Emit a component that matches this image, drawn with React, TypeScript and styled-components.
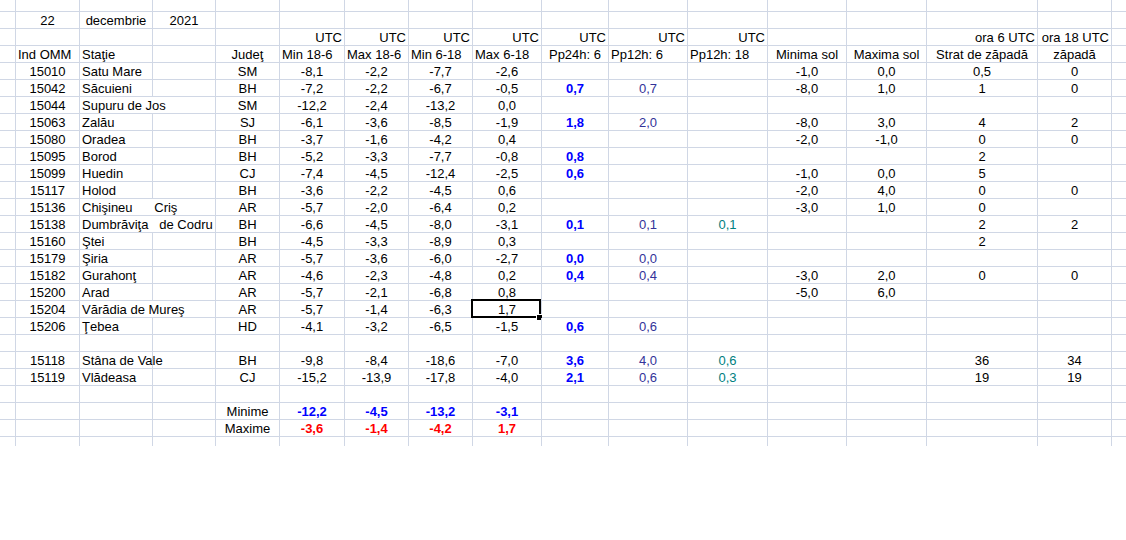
import React from "react";
import styled, { createGlobalStyle } from "styled-components";

const GlobalStyle = createGlobalStyle`
  html, body { margin: 0; padding: 0; background: #ffffff; }
  body {
    font-family: "Liberation Sans", Arial, sans-serif;
    font-size: 13px;
    color: #000000;
  }
`;

type Align = "l" | "c" | "r";
type Tone = "black" | "blue" | "purple" | "teal" | "red";

const toneColor: Record<Tone, string> = {
  black: "#000000",
  blue: "#0000ff",
  purple: "#333399",
  teal: "#008080",
  red: "#ff0000",
};

const Sheet = styled.div`
  display: grid;
  grid-template-columns: 16px 64px 73px 63px 64px 65px 64px 64px 69px 67px 79px 80px 79px 80px 111px 74px 14px;
  grid-template-rows: 12px repeat(25, 17px) 9px;
  width: 1126px;
  overflow: hidden;
`;

const Cell = styled.div<{ $align: Align; $tone: Tone; $bold: boolean; $span: number; $edge: boolean; $open: boolean }>`
  position: relative;
  box-sizing: border-box;
  grid-column: span ${(p) => p.$span};
  border-right: ${(p) => (p.$edge ? "none" : "1px solid #d0d7e5")};
  border-bottom: ${(p) => (p.$open ? "none" : "1px solid #d0d7e5")};
  padding: 1px 2px 0 2px;
  line-height: 15px;
  white-space: pre;
  text-align: ${(p) => (p.$align === "l" ? "left" : p.$align === "r" ? "right" : "center")};
  font-weight: ${(p) => (p.$bold ? 700 : 400)};
  color: ${(p) => toneColor[p.$tone]};
`;

const Selection = styled.div`
  position: absolute;
  left: -2px;
  top: -2px;
  right: 0;
  bottom: -1px;
  border: 2px solid #000000;
  pointer-events: none;
`;

const Handle = styled.div`
  position: absolute;
  right: -3px;
  bottom: -4px;
  width: 5px;
  height: 5px;
  background: #000000;
  border-left: 1px solid #ffffff;
  border-top: 1px solid #ffffff;
`;

type C = { t?: string; a?: Align; tone?: Tone; b?: boolean; span?: number; sel?: boolean };

const E: C = {};

const NCOLS = 17;

function dataRow(
  id: string,
  name: string,
  jud: string,
  vals: [string, string, string, string],
  pp24: string,
  pp6: string,
  pp18: string,
  minSol: string,
  maxSol: string,
  strat: string,
  z18: string,
  wide = false,
  selected = false
): C[] {
  const cells: C[] = [E, { t: id, a: "c" }];
  if (wide) cells.push({ t: name, a: "l", span: 2 });
  else cells.push({ t: name, a: "l" }, E);
  cells.push(
    { t: jud, a: "c" },
    { t: vals[0], a: "c" },
    { t: vals[1], a: "c" },
    { t: vals[2], a: "c" },
    { t: vals[3], a: "c", sel: selected },
    { t: pp24, a: "c", tone: "blue", b: true },
    { t: pp6, a: "c", tone: "purple" },
    { t: pp18, a: "c", tone: "teal" },
    { t: minSol, a: "c" },
    { t: maxSol, a: "c" },
    { t: strat, a: "c" },
    { t: z18, a: "c" },
    E
  );
  return cells;
}

const emptyRow = (): C[] => Array.from({ length: NCOLS }, () => E);

const utc: C = { t: "UTC", a: "r" };

const rows: C[][] = [
  emptyRow(),
  [E, { t: "22", a: "c" }, { t: "decembrie", a: "c" }, { t: "2021", a: "c" }, E, E, E, E, E, E, E, E, E, E, E, E, E],
  [E, E, E, E, E, utc, utc, utc, utc, utc, utc, utc, E, E, { t: "ora 6 UTC", a: "r" }, { t: "ora 18 UTC", a: "r" }, E],
  [
    E,
    { t: "Ind OMM", a: "l" },
    { t: "Staţie", a: "l" },
    E,
    { t: "Judeţ", a: "c" },
    { t: "Min 18-6", a: "l" },
    { t: "Max 18-6", a: "l" },
    { t: "Min 6-18", a: "l" },
    { t: "Max 6-18", a: "l" },
    { t: "Pp24h: 6", a: "c" },
    { t: "Pp12h: 6", a: "l" },
    { t: "Pp12h: 18", a: "l" },
    { t: "Minima sol", a: "c" },
    { t: "Maxima sol", a: "c" },
    { t: "Strat de zăpadă", a: "c" },
    { t: "zăpadă", a: "c" },
    E,
  ],
  dataRow("15010", "Satu Mare", "SM", ["-8,1", "-2,2", "-7,7", "-2,6"], "", "", "", "-1,0", "0,0", "0,5", "0"),
  dataRow("15042", "Săcuieni", "BH", ["-7,2", "-2,2", "-6,7", "-0,5"], "0,7", "0,7", "", "-8,0", "1,0", "1", "0"),
  dataRow("15044", "Supuru de Jos", "SM", ["-12,2", "-2,4", "-13,2", "0,0"], "", "", "", "", "", "", "", true),
  dataRow("15063", "Zalău", "SJ", ["-6,1", "-3,6", "-8,5", "-1,9"], "1,8", "2,0", "", "-8,0", "3,0", "4", "2"),
  dataRow("15080", "Oradea", "BH", ["-3,7", "-1,6", "-4,2", "0,4"], "", "", "", "-2,0", "-1,0", "0", "0"),
  dataRow("15095", "Borod", "BH", ["-5,2", "-3,3", "-7,7", "-0,8"], "0,8", "", "", "", "", "2", ""),
  dataRow("15099", "Huedin", "CJ", ["-7,4", "-4,5", "-12,4", "-2,5"], "0,6", "", "", "-1,0", "0,0", "5", ""),
  dataRow("15117", "Holod", "BH", ["-3,6", "-2,2", "-4,5", "0,6"], "", "", "", "-2,0", "4,0", "0", "0"),
  dataRow("15136", "Chişineu      Criş", "AR", ["-5,7", "-2,0", "-6,4", "0,2"], "", "", "", "-3,0", "1,0", "0", "", true),
  dataRow("15138", "Dumbrăviţa   de Codru", "BH", ["-6,6", "-4,5", "-8,0", "-3,1"], "0,1", "0,1", "0,1", "", "", "2", "2", true),
  dataRow("15160", "Ştei", "BH", ["-4,5", "-3,3", "-8,9", "0,3"], "", "", "", "", "", "2", ""),
  dataRow("15179", "Şiria", "AR", ["-5,7", "-3,6", "-6,0", "-2,7"], "0,0", "0,0", "", "", "", "", ""),
  dataRow("15182", "Gurahonţ", "AR", ["-4,6", "-2,3", "-4,8", "0,2"], "0,4", "0,4", "", "-3,0", "2,0", "0", "0"),
  dataRow("15200", "Arad", "AR", ["-5,7", "-2,1", "-6,8", "0,8"], "", "", "", "-5,0", "6,0", "", ""),
  dataRow("15204", "Vărădia de Mureş", "AR", ["-5,7", "-1,4", "-6,3", "1,7"], "", "", "", "", "", "", "", true, true),
  dataRow("15206", "Ţebea", "HD", ["-4,1", "-3,2", "-6,5", "-1,5"], "0,6", "0,6", "", "", "", "", ""),
  emptyRow(),
  dataRow("15118", "Stâna de Vale", "BH", ["-9,8", "-8,4", "-18,6", "-7,0"], "3,6", "4,0", "0,6", "", "", "36", "34"),
  dataRow("15119", "Vlădeasa", "CJ", ["-15,2", "-13,9", "-17,8", "-4,0"], "2,1", "0,6", "0,3", "", "", "19", "19"),
  emptyRow(),
  [
    E, E, E, E,
    { t: "Minime", a: "c" },
    { t: "-12,2", a: "c", tone: "blue", b: true },
    { t: "-4,5", a: "c", tone: "blue", b: true },
    { t: "-13,2", a: "c", tone: "blue", b: true },
    { t: "-3,1", a: "c", tone: "blue", b: true },
    E, E, E, E, E, E, E, E,
  ],
  [
    E, E, E, E,
    { t: "Maxime", a: "c" },
    { t: "-3,6", a: "c", tone: "red", b: true },
    { t: "-1,4", a: "c", tone: "red", b: true },
    { t: "-4,2", a: "c", tone: "red", b: true },
    { t: "1,7", a: "c", tone: "red", b: true },
    E, E, E, E, E, E, E, E,
  ],
  emptyRow(),
];

export default function App() {
  const lastRow = rows.length - 1;
  return (
    <>
      <GlobalStyle />
      <Sheet>
        {rows.map((row, r) => {
          let col = 0;
          return row.map((c, i) => {
            const span = c.span ?? 1;
            col += span;
            const edge = col >= NCOLS;
            return (
              <Cell
                key={`${r}-${i}`}
                $align={c.a ?? "c"}
                $tone={c.tone ?? "black"}
                $bold={!!c.b}
                $span={span}
                $edge={edge}
                $open={r === lastRow}
              >
                {c.t ?? ""}
                {c.sel && (
                  <Selection>
                    <Handle />
                  </Selection>
                )}
              </Cell>
            );
          });
        })}
      </Sheet>
    </>
  );
}
